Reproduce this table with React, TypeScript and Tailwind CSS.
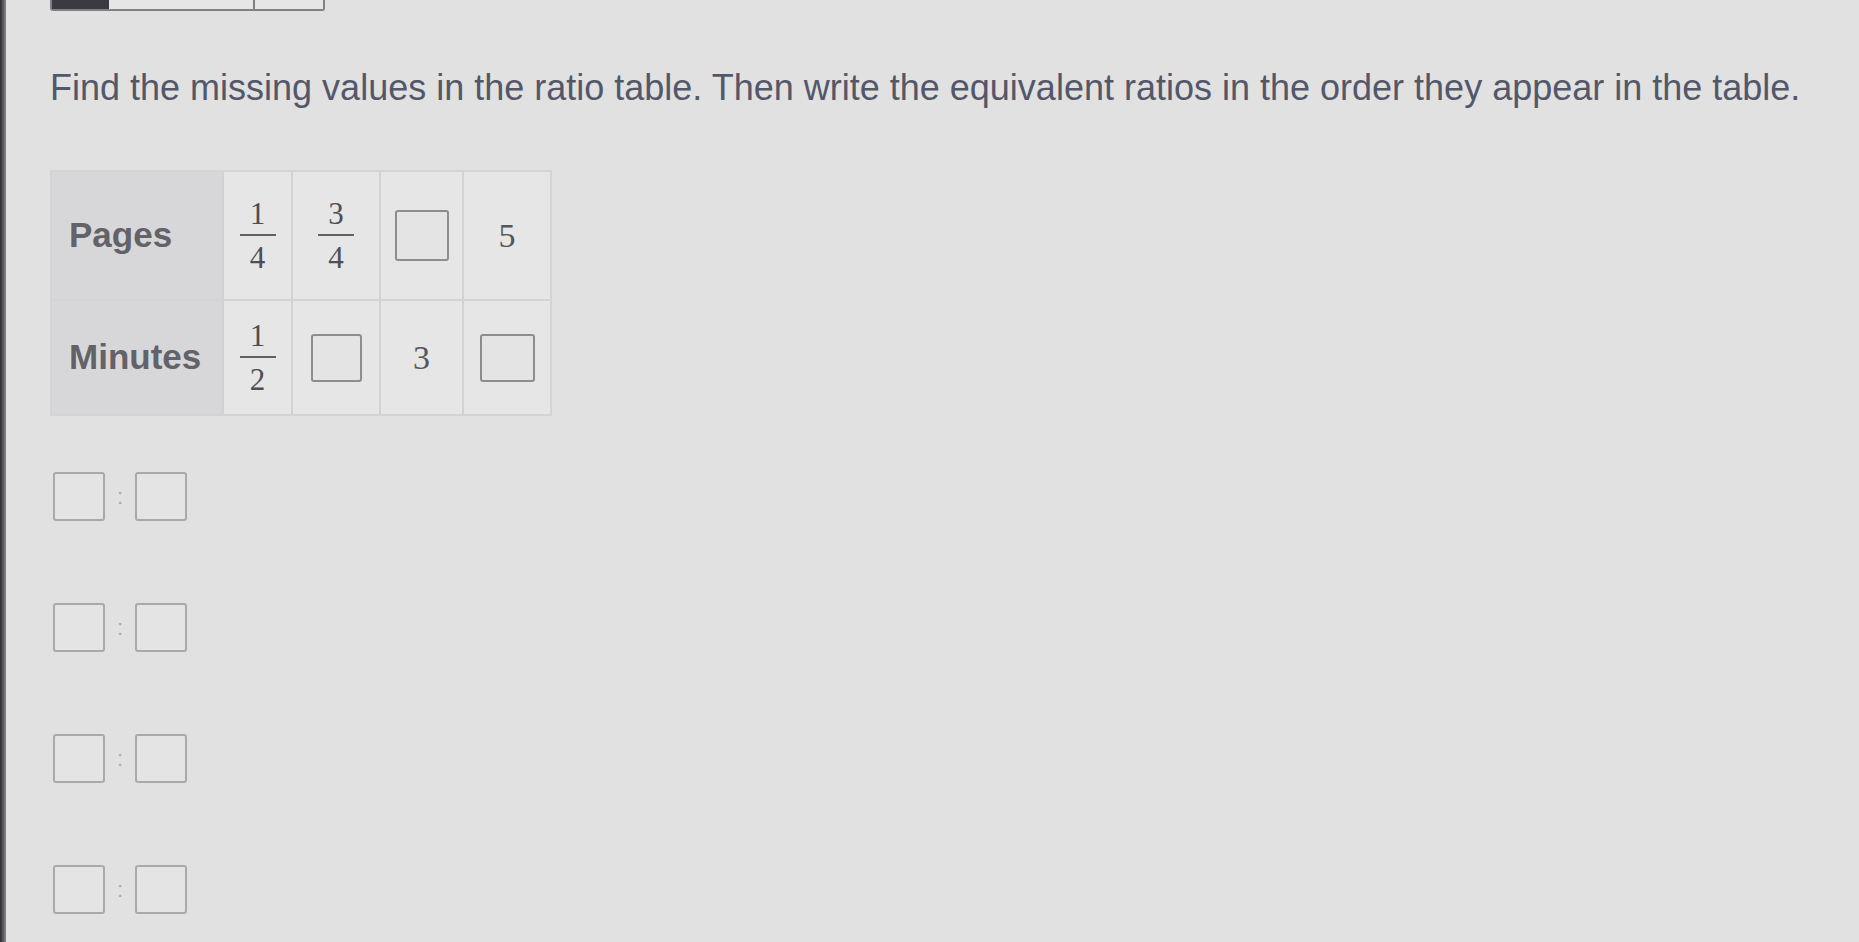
import React from "react";

function Box({ size = "w-[52px] h-[49px]", light = false }: { size?: string; light?: boolean }) {
  return (
    <div
      className={`${size} rounded-[3px] border-2 ${light ? "border-[#a9a9aa]" : "border-[#8d8d90]"} bg-[#e4e4e4]`}
    />
  );
}

function Frac({ num, den }: { num: string; den: string }) {
  return (
    <div className="flex flex-col items-center leading-none text-[#4e4e54] font-['Liberation_Serif',serif] text-[31px]">
      <span className="pb-[5px]">{num}</span>
      <span className="w-[36px] h-[2px] bg-[#606066]" />
      <span className="pt-[6px]">{den}</span>
    </div>
  );
}

function Cell({ children, w }: { children?: React.ReactNode; w: string }) {
  return (
    <div className={`${w} flex items-center justify-center border-l-2 border-[#d2d2d2] bg-[#e6e6e6]`}>
      {children}
    </div>
  );
}

function Num({ v }: { v: string }) {
  return <span className="text-[34px] text-[#55555a] font-['Liberation_Serif',serif]">{v}</span>;
}

function RatioRow() {
  return (
    <div className="flex items-center gap-[12px]">
      <Box light />
      <span className="text-[22px] leading-none text-[#aaaaac] font-['Liberation_Sans',sans-serif]">:</span>
      <Box light />
    </div>
  );
}

export default function App() {
  return (
    <div className="flex w-[1859px] h-[942px] overflow-hidden bg-[#e1e1e1] font-['Liberation_Sans',Arial,sans-serif]">
      {/* screen edge */}
      <div className="w-[6px] shrink-0 bg-gradient-to-r from-[#2a2a30] to-[#8a8890]" />

      <div className="flex-1 pl-[44px]">
        {/* tabs peeking in at the top */}
        <div className="flex h-[11px]">
          <div className="flex w-[275px] border-2 border-t-0 border-[#808086] rounded-b-[3px] bg-[#e6e6e6]">
            <div className="w-[57px] bg-[#3a3a40]" />
            <div className="w-[146px] border-r-2 border-[#808086]" />
            <div className="flex-1" />
          </div>
        </div>

        <p className="mt-[59px] text-[36px] leading-none text-[#53576a]">
          Find the missing values in the ratio table. Then write the equivalent ratios in the order they appear in the table.
        </p>

        <div className="mt-[64px] inline-flex flex-col border-2 border-[#d4d4d4] bg-[#e6e6e6]">
          <div className="flex h-[127px]">
            <div className="w-[170px] flex items-center pl-[17px] bg-[#d7d7da] text-[35px] font-bold text-[#626268]">
              Pages
            </div>
            <Cell w="w-[69px]">
              <Frac num="1" den="4" />
            </Cell>
            <Cell w="w-[88px]">
              <Frac num="3" den="4" />
            </Cell>
            <Cell w="w-[83px]">
              <Box size="w-[54px] h-[51px]" />
            </Cell>
            <Cell w="w-[88px]">
              <Num v="5" />
            </Cell>
          </div>
          <div className="flex h-[115px] border-t-2 border-[#d4d4d4]">
            <div className="w-[170px] flex items-center pl-[17px] bg-[#d7d7da] text-[35px] font-bold text-[#626268]">
              Minutes
            </div>
            <Cell w="w-[69px]">
              <Frac num="1" den="2" />
            </Cell>
            <Cell w="w-[88px]">
              <Box size="w-[51px] h-[48px]" />
            </Cell>
            <Cell w="w-[83px]">
              <Num v="3" />
            </Cell>
            <Cell w="w-[88px]">
              <Box size="w-[55px] h-[48px]" />
            </Cell>
          </div>
        </div>

        <div className="mt-[56px] flex flex-col gap-[82px] pl-[3px]">
          <RatioRow />
          <RatioRow />
          <RatioRow />
          <RatioRow />
        </div>
      </div>
    </div>
  );
}
